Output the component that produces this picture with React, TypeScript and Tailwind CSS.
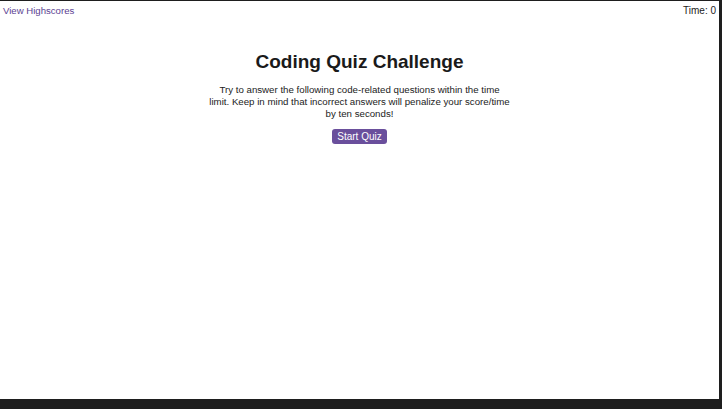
export default function App() {
  return (
    <div className="h-[409px] w-[722px] bg-[#1e1e1e] pt-px pr-[3px] pb-[10px] font-['Liberation_Sans',Arial,sans-serif]">
      <div className="h-full w-full bg-white">
        <header className="flex items-start justify-between px-[3px] pt-[3px] text-[10px] leading-[14px]">
          <a className="text-[9.6px] text-[#5b3f92]">View Highscores</a>
          <span className="text-[#222]">Time: 0</span>
        </header>

        <main className="mx-auto flex w-[302px] flex-col items-center pt-[32px] text-center">
          <h1 className="text-[19px] font-bold leading-[24px] text-[#1a1a1a]">Coding Quiz Challenge</h1>
          <p className="mt-[10px] text-[9.7px] leading-[12px] text-[#222]">
            Try to answer the following code-related questions within the time limit. Keep in mind that
            incorrect answers will penalize your score/time by ten seconds!
          </p>
          <button className="mt-[9px] rounded-[3px] bg-[#6a4f9c] px-[5px] text-[10px] leading-[15px] text-white">
            Start Quiz
          </button>
        </main>
      </div>
    </div>
  );
}
